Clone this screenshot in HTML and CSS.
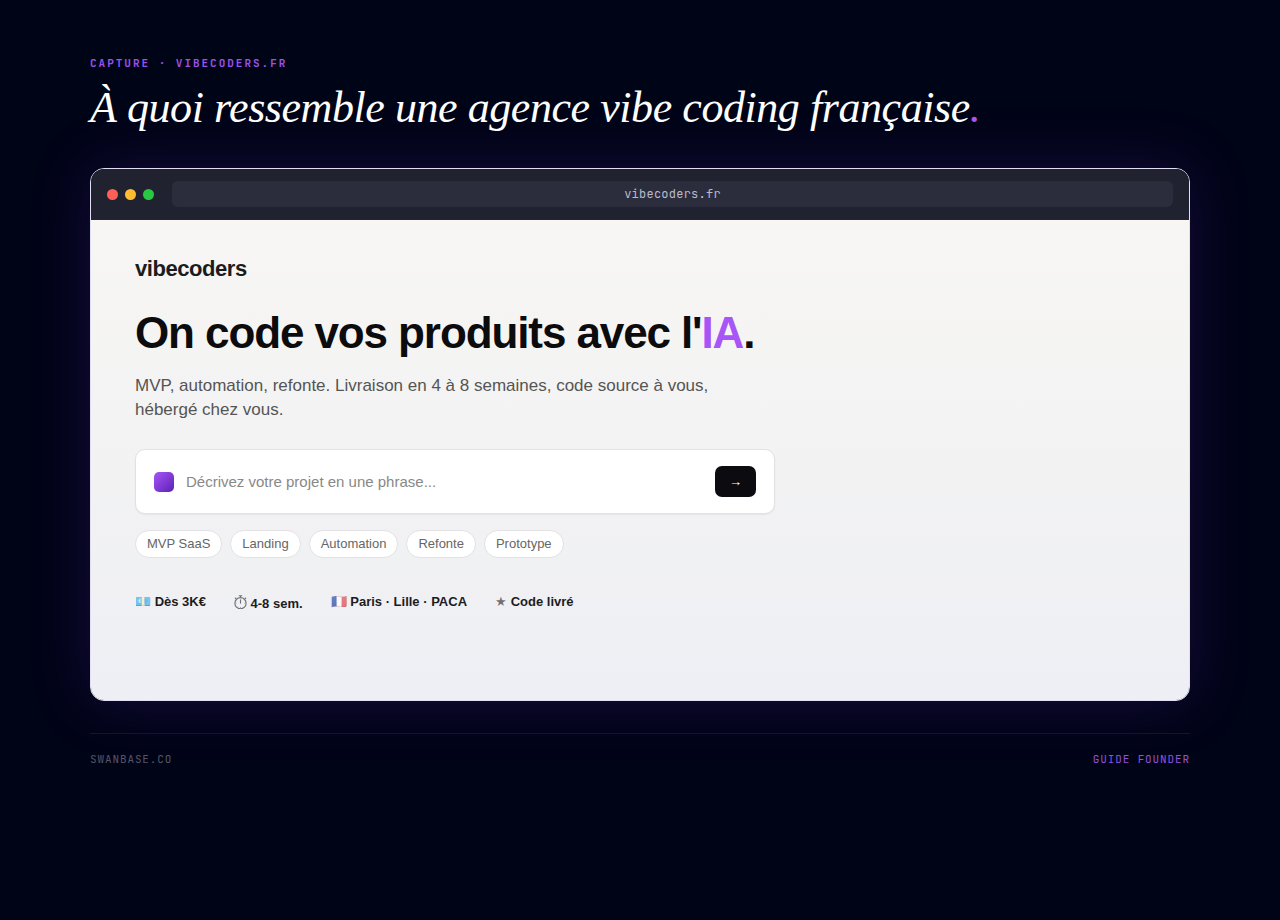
FILE: index.html
```
<!DOCTYPE html>
<html lang="fr">

<head>
    <meta charset="UTF-8">
    <meta name="viewport" content="width=device-width, initial-scale=1.0">
    <title>Capture · vibecoders.fr</title>
    <link rel="stylesheet" href="styles.css">
</head>

<body>
    <main class="page">
        <header>
            <p class="eyebrow">CAPTURE · VIBECODERS.FR</p>
            <h1 class="title">À quoi ressemble une agence vibe coding française<span>.</span></h1>
        </header>

        <!-- browser window -->
        <section class="browser">
            <div class="bar">
                <div class="dots">
                    <i class="red"></i>
                    <i class="yellow"></i>
                    <i class="green"></i>
                </div>
                <div class="url">vibecoders.fr</div>
            </div>

            <div class="site">
                <div class="logo">vibecoders</div>
                <h2>On code vos produits avec l'<span>IA</span>.</h2>
                <p class="lead">MVP, automation, refonte. Livraison en 4 à 8 semaines, code source à vous, hébergé chez vous.</p>

                <form class="prompt">
                    <span class="mark"></span>
                    <input type="text" placeholder="Décrivez votre projet en une phrase..." aria-label="Décrivez votre projet">
                    <button type="button" aria-label="Envoyer">→</button>
                </form>

                <div class="chips">
                    <button type="button">MVP SaaS</button>
                    <button type="button">Landing</button>
                    <button type="button">Automation</button>
                    <button type="button">Refonte</button>
                    <button type="button">Prototype</button>
                </div>

                <ul class="facts">
                    <li><span>💶</span> <b>Dès 3K€</b></li>
                    <li>
                        <svg class="clock" viewBox="0 0 13 15" fill="none" stroke="#1c1c20">
                            <circle cx="6.5" cy="9.2" r="5.6" stroke-width="1.1" />
                            <path d="M4.8 1.8h3.4M6.5 1.8v1.8M10.9 3.7l1.1 1.1M2.1 3.7L1 4.8" stroke-width="1.1" />
                            <path d="M6.5 5.4v4.2" stroke-width="1.1" />
                            <path d="M6.5 13v0.8M1.6 9.2h0.8M10.6 9.2h0.8" stroke-width="0.7" />
                        </svg>
                        <b>4-8 sem.</b>
                    </li>
                    <li><span>🇫🇷</span> <b>Paris · Lille · PACA</b></li>
                    <li><span>★</span> <b>Code livré</b></li>
                </ul>
            </div>
        </section>

        <footer class="footer">
            <span>SWANBASE.CO</span>
            <span class="guide">GUIDE FOUNDER</span>
        </footer>
    </main>
</body>

</html>
```
FILE: styles.css
```
* {
    box-sizing: border-box;
    margin: 0;
    padding: 0;
}

body {
    background-color: #000417;
    font-family: "Liberation Sans", Arial, sans-serif;
    color: #fff;
}

.page {
    padding: 56px 90px;
}

.eyebrow,
.url,
.footer {
    font-family: "JetBrains Mono", "Liberation Mono", monospace;
}

.eyebrow {
    font-size: 11px;
    line-height: 15px;
    font-weight: 600;
    letter-spacing: 0.18em;
    color: #9d50e8;
}

.title {
    margin: 12px 0 36px;
    font-family: "Liberation Serif", "Times New Roman", serif;
    font-size: 44px;
    line-height: 49px;
    font-style: italic;
    font-weight: 400;
    letter-spacing: -0.01em;
}

.title span,
.site h2 span {
    color: #a855f7;
}

.browser {
    border: 1px solid #e2dff5;
    border-radius: 14px;
    overflow: hidden;
    box-shadow: 0 0 60px rgba(100, 40, 180, 0.22);
}

.bar {
    display: flex;
    align-items: center;
    gap: 18px;
    padding: 12px 16px;
    background-color: #212230;
    border-bottom: 1px solid #242434;
}

.dots {
    display: flex;
    gap: 7px;
}

.dots i {
    width: 11px;
    height: 11px;
    border-radius: 50%;
}

.red {
    background-color: #ff5f57;
}

.yellow {
    background-color: #febc2e;
}

.green {
    background-color: #28c840;
}

.url {
    flex: 1;
    border-radius: 6px;
    background-color: #2b2d3d;
    color: #b9bbcb;
    font-size: 12px;
    line-height: 26px;
    letter-spacing: 0.02em;
    text-align: center;
}

.site {
    min-height: 480px;
    padding: 36px 44px;
    background: linear-gradient(#f7f6f3, #eeeff4);
    color: #0c0c0e;
}

.logo {
    font-size: 22px;
    line-height: 25px;
    font-weight: 700;
    letter-spacing: -0.02em;
    color: #1c1c1e;
}

.site h2 {
    margin: 28px 0 17px;
    font-size: 44px;
    line-height: 48px;
    letter-spacing: -0.025em;
}

.lead {
    max-width: 600px;
    font-size: 17px;
    line-height: 24px;
    color: #555;
}

.prompt {
    display: flex;
    align-items: center;
    gap: 12px;
    max-width: 640px;
    margin: 27px 0 16px;
    padding: 16px 18px;
    border: 1px solid #e2e2e4;
    border-radius: 10px;
    background-color: #fff;
    box-shadow: 0 1px 2px rgba(0, 0, 0, 0.06);
}

.mark {
    width: 20px;
    height: 20px;
    border-radius: 5px;
    background: linear-gradient(135deg, #a855f7, #5b21b6);
}

.prompt input {
    flex: 1;
    border: 0;
    outline: 0;
    background: none;
    font-family: inherit;
    font-size: 15px;
}

.prompt input::placeholder {
    color: #888;
}

.prompt button {
    padding: 8px 14px;
    border: 0;
    border-radius: 7px;
    background-color: #0c0c10;
    color: #fff;
    font-family: inherit;
    font-size: 13px;
    line-height: 15px;
}

.chips {
    display: flex;
    gap: 8px;
}

.chips button {
    padding: 6px 11px;
    border: 1px solid #e2e2e4;
    border-radius: 14px;
    background-color: #fff;
    color: #666;
    font-family: inherit;
    font-size: 13px;
    line-height: 14px;
}

.facts {
    display: flex;
    gap: 28px;
    margin-top: 36px;
    list-style: none;
    font-size: 13px;
    color: #1c1c1e;
}

.facts span,
.clock {
    opacity: 0.6;
}

.clock {
    width: 13px;
    height: 15px;
    vertical-align: -1px;
}

.footer {
    display: flex;
    justify-content: space-between;
    margin-top: 32px;
    padding-top: 18px;
    border-top: 1px solid #161426;
    font-size: 11px;
    line-height: 15px;
    letter-spacing: 0.08em;
    color: #53556a;
}

.guide {
    color: #9450dc;
}
```
